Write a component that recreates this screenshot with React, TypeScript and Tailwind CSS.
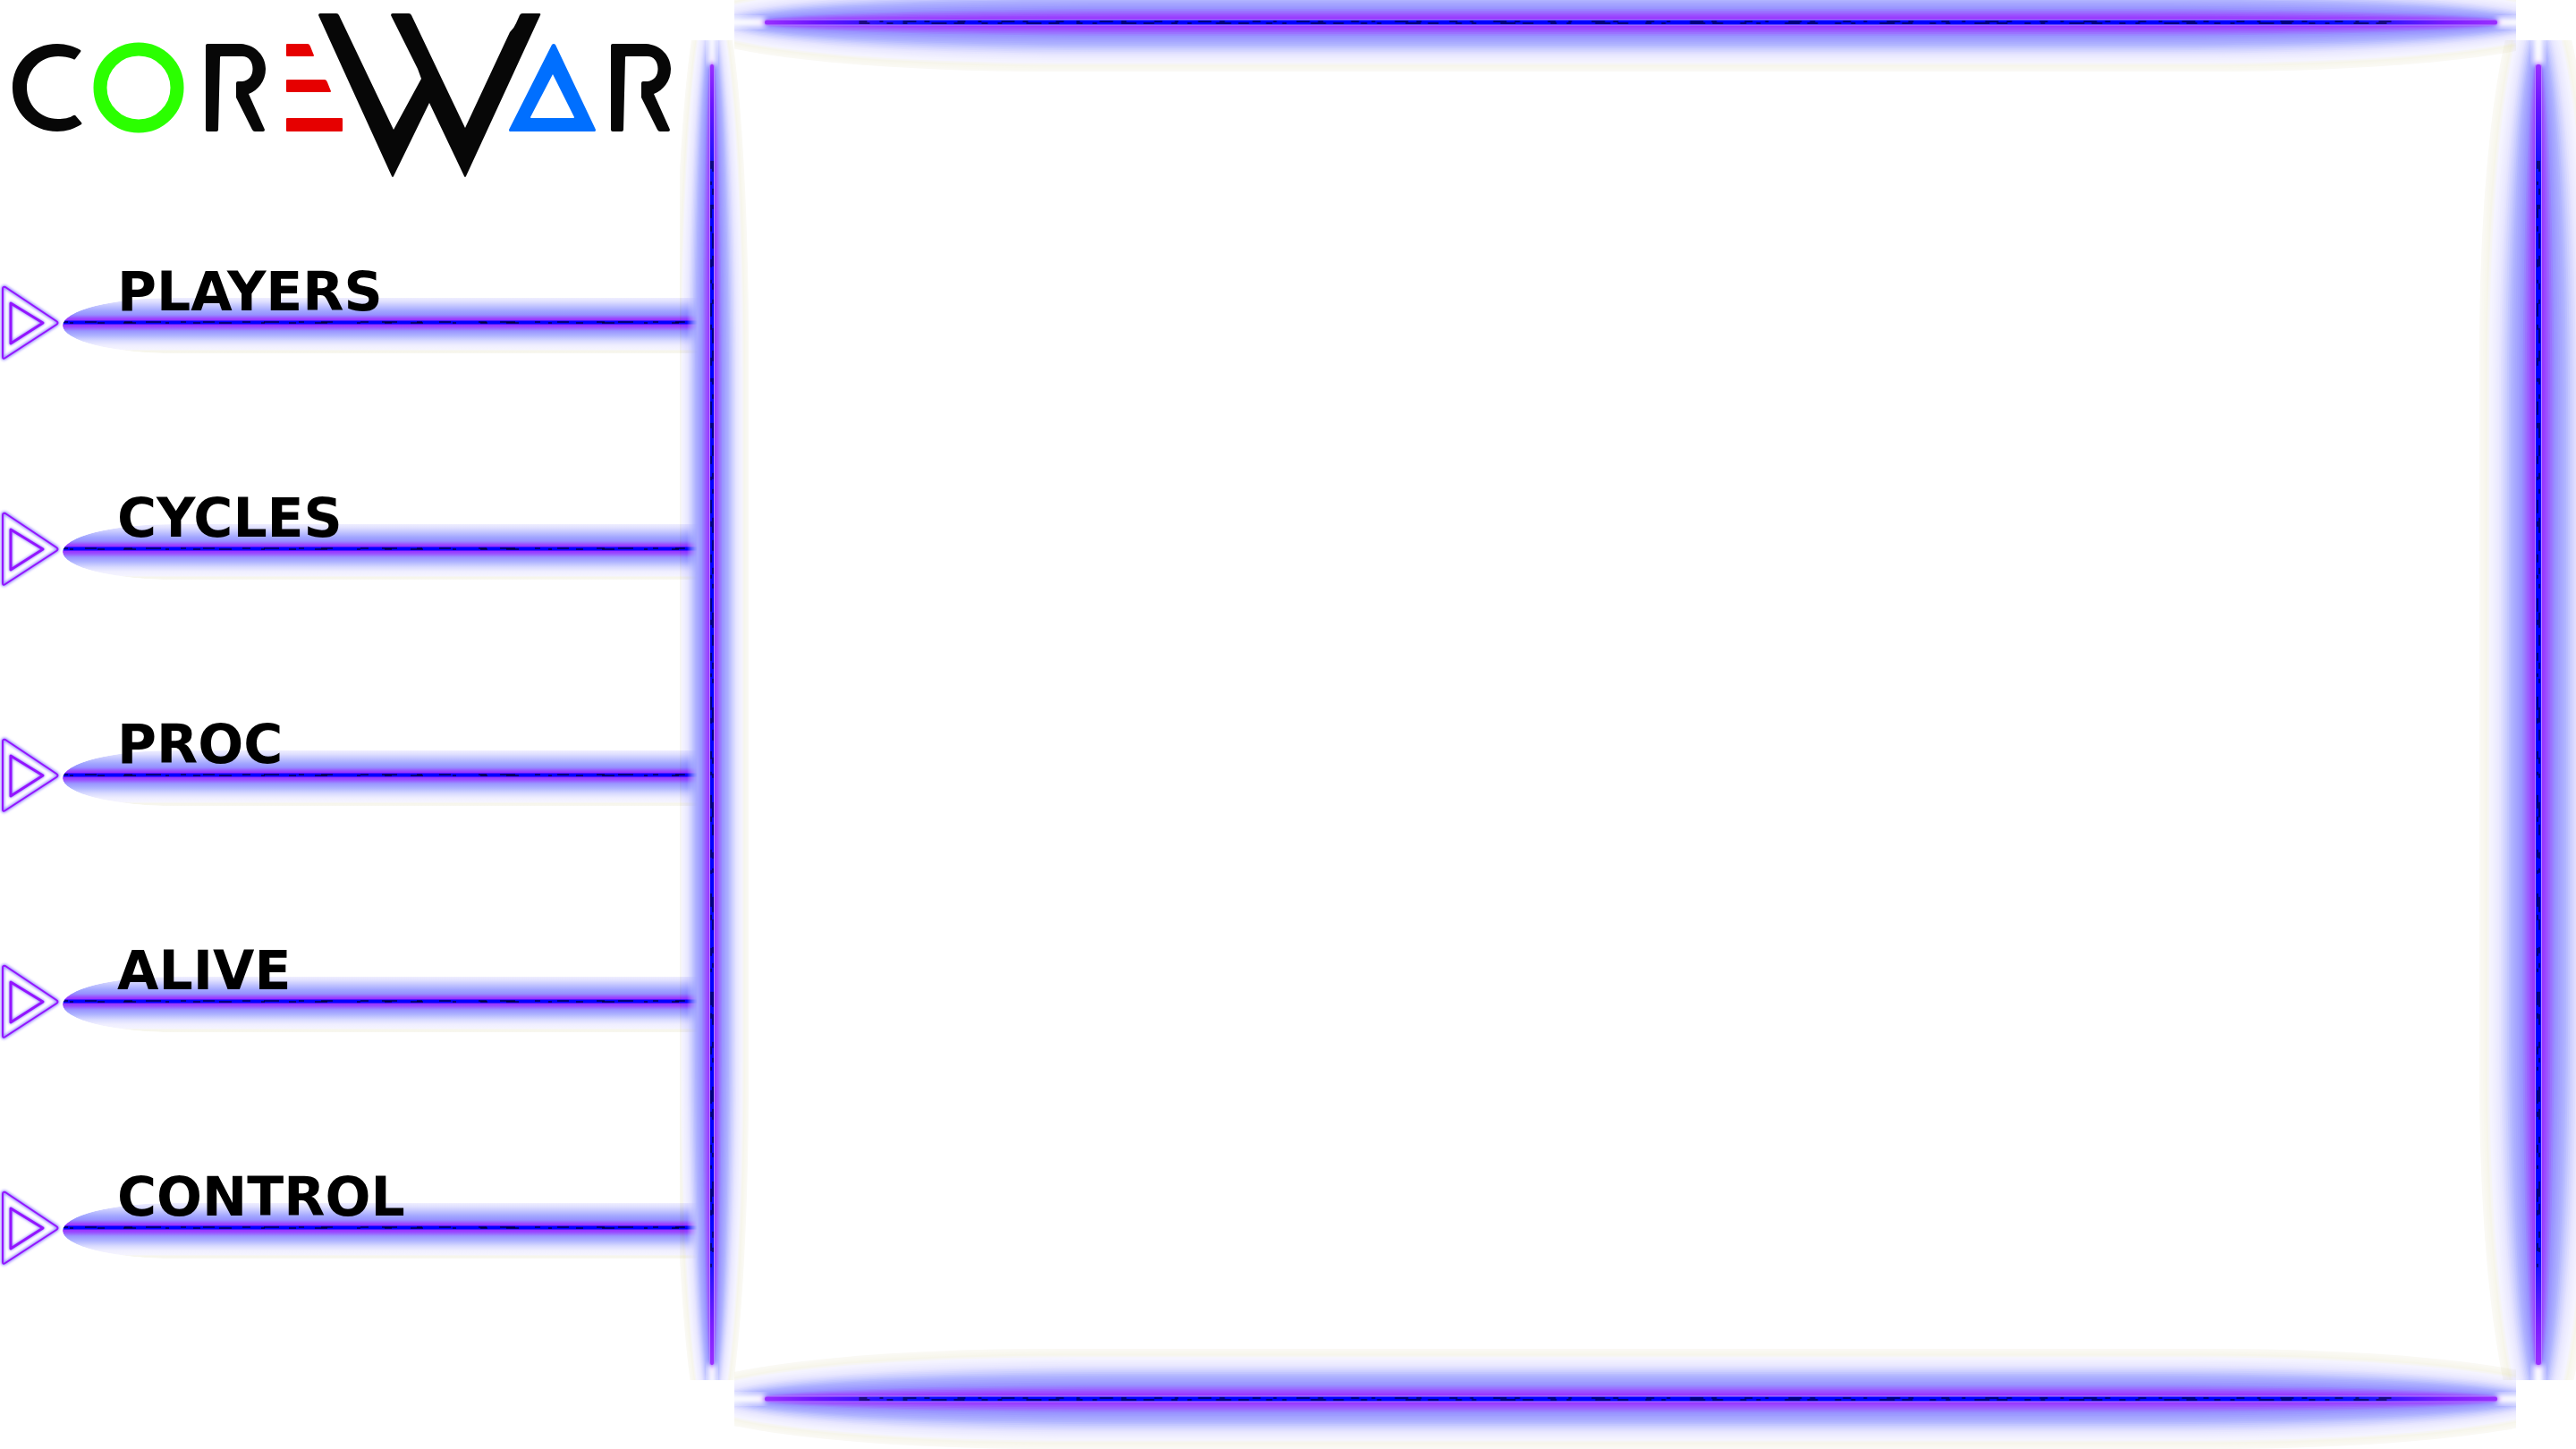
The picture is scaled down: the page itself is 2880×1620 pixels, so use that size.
import React from "react";

const MENU = ["PLAYERS", "CYCLES", "PROC", "ALIVE", "CONTROL"];

const STOPS: [number, number[]][] = [
  [0.06, [150, 40, 255]],
  [0.16, [155, 80, 255]],
  [0.3, [153, 148, 255]],
  [0.46, [174, 178, 255]],
  [0.58, [208, 210, 255]],
  [0.68, [232, 231, 255]],
  [0.84, [246, 245, 255]],
  [0.89, [246, 245, 234]],
  [1, [250, 249, 244]],
];

function colourAt(t: number) {
  for (let i = 1; i < STOPS.length; i++) {
    const [a, ca] = STOPS[i - 1];
    const [b, cb] = STOPS[i];
    if (t <= b) {
      const k = Math.max(0, (t - a) / (b - a));
      return `rgb(${ca.map((v, j) => Math.round(v + (cb[j] - v) * k)).join(",")})`;
    }
  }
  return "rgb(250,249,244)";
}

const LAYERS = Array.from({ length: 28 }, (_, i) => 1 - i * 0.0333);

type BeamProps = {
  id: string;
  vertical?: boolean;
  center: number;
  spread: number;
  core: number;
  start: number;
  end: number;
  className: string;
};

/* A neon tube: stacked, tapering bands of colour around a bright core. */
function Beam({ id, vertical, center, spread, core, start, end, className }: BeamProps) {
  const box = (a: number, b: number, half: number): React.CSSProperties =>
    vertical
      ? { y: `${a}px`, height: `calc(100% - ${a + b}px)`, x: `${center - half}px`, width: `${half * 2}px` } as React.CSSProperties
      : { x: `${a}px`, width: `calc(100% - ${a + b}px)`, y: `${center - half}px`, height: `${half * 2}px` } as React.CSSProperties;
  const along = vertical ? { x1: "0", y1: "0", x2: "0", y2: "1" } : { x1: "0", y1: "0", x2: "1", y2: "0" };
  const plug = core / 2 + 3;
  const line = (off: number) =>
    vertical
      ? { x1: center + off, x2: center + off, y1: "9%", y2: "92%" }
      : { y1: center + off, y2: center + off, x1: "7%", x2: "93%" };
  return (
    <svg className={`block h-full w-full overflow-hidden mix-blend-multiply ${className}`} aria-hidden="true">
      <defs>
        <linearGradient id={`${id}-core`} {...along}>
          <stop offset="0" stopColor="#9a2fff" />
          <stop offset="0.03" stopColor="#6a14ff" />
          <stop offset="0.08" stopColor="#1010ff" />
          <stop offset="0.12" stopColor="#0000ff" />
          <stop offset="0.88" stopColor="#0000ff" />
          <stop offset="0.92" stopColor="#1010ff" />
          <stop offset="0.97" stopColor="#7a1cff" />
          <stop offset="1" stopColor="#9a2fff" />
        </linearGradient>
        <filter id={`${id}-soft`} x="-20%" y="-20%" width="140%" height="140%">
          <feGaussianBlur stdDeviation="3" />
        </filter>
      </defs>
      {LAYERS.map((t) => {
        const out = 100 * Math.pow(t, 1.5);
        const r = 420;
        const half = spread * t;
        return (
          <rect
            key={t}
            rx={vertical ? half : r}
            ry={vertical ? r : half}
            fill={colourAt(t)}
            style={box(start - out, end - out, half)}
          />
        );
      })}
      <g fill="#fff" filter={`url(#${id}-soft)`}>
        {vertical ? (
          <>
            <rect x={center - plug} y={-10} width={plug * 2} height={start + 10} />
            <svg y="100%" overflow="visible">
              <rect x={center - plug} y={-end} width={plug * 2} height={end + 10} />
            </svg>
          </>
        ) : (
          <>
            <rect y={center - plug} x={-10} height={plug * 2} width={start + 10} />
            <svg x="100%" overflow="visible">
              <rect y={center - plug} x={-end} height={plug * 2} width={end + 10} />
            </svg>
          </>
        )}
      </g>
      <rect rx={3} fill="#b184ff" style={box(start, end, core / 2 + 1)} />
      <rect rx={3} fill={`url(#${id}-core)`} style={box(start, end, core / 2)} />
      <line {...line(-1)} stroke="#000" strokeWidth={1} strokeDasharray="9 14 4 22 15 9 6 31" />
      <line {...line(1)} stroke="#000" strokeWidth={1} strokeDasharray="12 19 7 11 5 27 17 8" />
    </svg>
  );
}

function LetterR() {
  return (
    <path d="M230 145V51q0-2 2-2H269C286 50 297 63 297 77C297 91 288 101 278 105L296 145q0 2-2 2H285q-2 0-3-2L264 109V93q0-2 2-2h5C278 90 282.500 85 282.500 77C282.500 69 278 63 271 63H247q-1 0-1 1L244 145q0 2-2 2H232q-2 0-2-2Z" />
  );
}

function Logo() {
  return (
    <svg viewBox="0 0 780 220" className="block w-full" role="img" aria-label="Corewar">
      <g fill="#070707">
        <path
          d="M14 98C14 70 36 49 64 49C74 49 83 52 90 56Q91 57 90 58L84 66Q83 67 82 66C77 64 71 63 65 63C45 63 30 79 30 98C30 117 45 133 65 133C71 133 78 132 82 129Q84 128 85 130L91 137Q92 138 91 139C83 144 74 147 64 147C36 147 14 126 14 98Z"
        />
        <LetterR />
        <g transform="translate(453 0)">
          <LetterR />
        </g>
        <path d="M356 17Q356 15 358 15H376Q378 15 379 17L440 145L471 88L467 77L437 17Q437 15 439 15H457Q459 15 460 17L520 143L570 36Q575 31 577 26L581 17Q582 15 584 15H603Q605 15 604 17L521 197Q520 199 519 197L480 115L440 197Q439 199 438 197Z" />
      </g>
      <ellipse cx={155} cy={98} rx={43} ry={43} fill="none" stroke="#2bff00" strokeWidth={15} />
      <g fill="#e60000">
        <path d="M320 50q0-1 1-1H344q2 0 3 3L351 62q0 1-1 1H321q-1 0-1-1Z" />
        <path d="M320 90q0-1 1-1H363q2 0 3 3L370 102q0 1-1 1H321q-1 0-1-1Z" />
        <rect x={320} y={132} width={63} height={15} rx={1} />
      </g>
      <path
        fill="#006fff"
        fillRule="evenodd"
        d="M617 50q2-2 4 0L666 145q0 2-1 2H570q-1 0-1-2ZM618 83L593 131q0 1 1 1H641q1 0 1-1Z"
      />
    </svg>
  );
}

function Arrow() {
  return (
    <svg viewBox="0 0 70 90" className="h-[90px] w-[70px] shrink-0" aria-hidden="true">
      <defs>
        <filter id="arrow-glow" x="-20%" y="-20%" width="140%" height="140%">
          <feGaussianBlur stdDeviation="1.600" />
        </filter>
      </defs>
      <g fill="none" strokeLinejoin="round">
        <g stroke="#9a8cff" strokeWidth={4} filter="url(#arrow-glow)">
          <path d="M3 7Q3 4 6 5L63 43Q66 45 63 47L6 84Q3 86 3 83Z" />
          <path d="M12 23L48 45L12 68Z" />
        </g>
        <path stroke="#9414ff" strokeWidth={2} d="M3 7Q3 4 6 5L63 43Q66 45 63 47L6 84Q3 86 3 83Z" />
        <path stroke="#9414ff" strokeWidth={3} d="M12 23L48 45L12 68Z" />
      </g>
    </svg>
  );
}

function MenuRow({ label }: { label: string }) {
  return (
    <li className="flex h-[128px] items-center">
      <Arrow />
      <div className="grid h-full flex-1">
        <div className="col-start-1 row-start-1 mt-[36px] h-[62px] overflow-hidden rounded-l-[125px_31px] bg-[linear-gradient(to_bottom,#efeeff_0px,#e0e0ff_4px,#bcbfff_10px,#a0a4ff_15px,#9690ff_19px,#9a48ff_23px,#9a30ff_25px,#0000ff_26px,#0000ff_29px,#9a30ff_30px,#9a50ff_33px,#9995ff_37px,#aeb3ff_42px,#d8daff_48px,#efeeff_53px,#f6f5ff_58px,#f6f5ea_59px,#f8f7f0_62px)] [mask-image:linear-gradient(to_right,black_calc(100%_-_12px),transparent)]">
          <svg className="block h-full w-full" aria-hidden="true">
            <line x1="0" x2="98%" y1="27" y2="27" stroke="#000" strokeWidth={1} strokeDasharray="6 19 13 31 9 15 17 22" />
            <line x1="8" x2="98%" y1="28" y2="28" stroke="#000" strokeWidth={1} strokeDasharray="4 27 8 21 14 33" />
          </svg>
        </div>
        <h2 className="z-10 col-start-1 row-start-1 pl-[61px] text-[60px] leading-[58px] font-bold text-black">{label}</h2>
      </div>
    </li>
  );
}

export default function App() {
  return (
    <div className="flex min-h-screen w-full overflow-hidden bg-white font-['DejaVu_Sans',sans-serif]">
      <aside className="w-[780px] shrink-0">
        <h1>
          <Logo />
        </h1>
        <ul className="mt-[77px] flex flex-col gap-[125px]">
          {MENU.map((label) => (
            <MenuRow key={label} label={label} />
          ))}
        </ul>
      </aside>
      <main
        aria-label="Arena"
        className="-ml-[20px] grid flex-1 grid-cols-[61px_16px_1fr_43px_67px] grid-rows-[45px_35px_1fr_37px_77px]"
      >
        <Beam id="top" center={25} spread={55} core={5} start={34} end={21} className="col-start-2 col-end-5 row-start-1 row-end-3" />
        <Beam id="left" vertical center={36} spread={41} core={4} start={27} end={17} className="col-start-1 col-end-3 row-start-2 row-end-5" />
        <Beam id="right" vertical center={68} spread={66} core={6} start={27} end={17} className="col-start-4 col-end-6 row-start-2 row-end-5" />
        <Beam id="bottom" center={58} spread={56} core={5} start={34} end={21} className="col-start-2 col-end-5 row-start-4 row-end-6" />
      </main>
    </div>
  );
}
